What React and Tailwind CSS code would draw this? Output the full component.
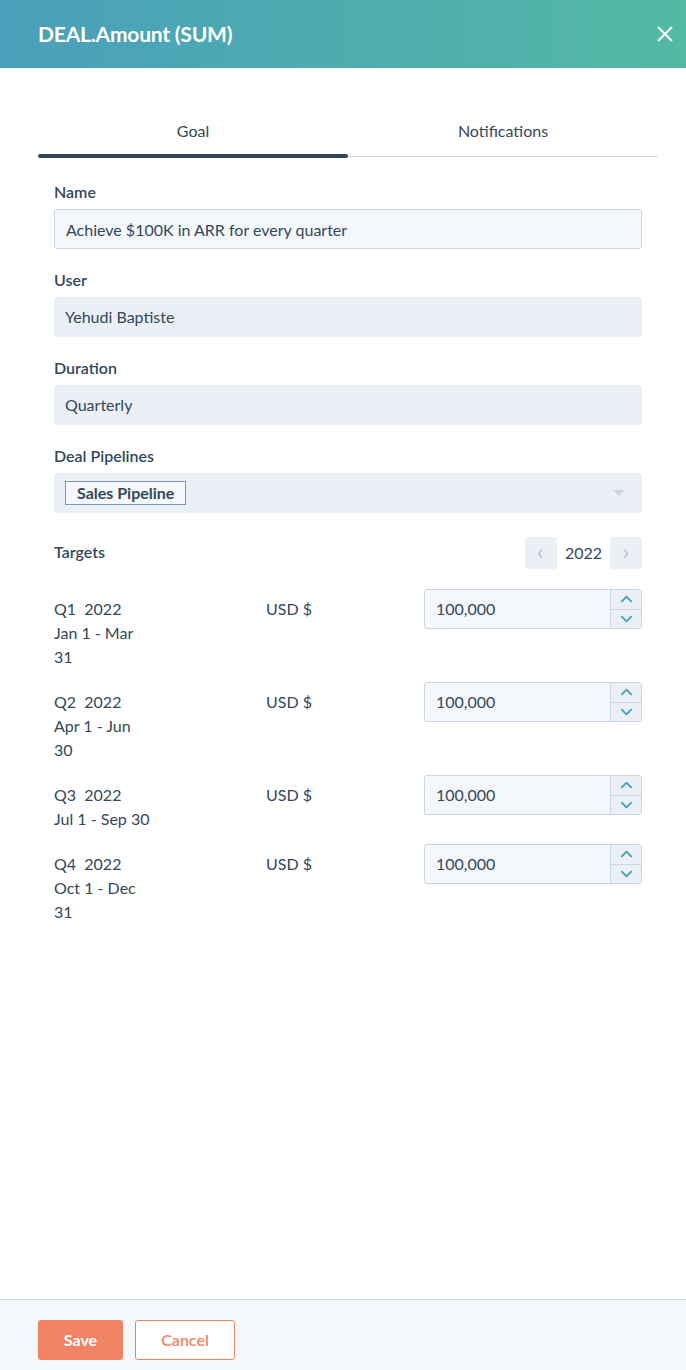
import { useState } from "react";

const quarters = [
  { q: "Q1", range: ["Jan 1 - Mar", "31"], value: "100,000" },
  { q: "Q2", range: ["Apr 1 - Jun", "30"], value: "100,000" },
  { q: "Q3", range: ["Jul 1 - Sep 30"], value: "100,000" },
  { q: "Q4", range: ["Oct 1 - Dec", "31"], value: "100,000" },
];

function Chevron({ dir = "up", className = "" }) {
  const d = {
    up: "M3 9 L8 4 L13 9",
    down: "M3 5 L8 10 L13 5",
    left: "M9 3 L5 8 L9 13",
    right: "M6 3 L10 8 L6 13",
  }[dir];
  return (
    <svg viewBox="0 0 16 14" className={className} fill="none">
      <path d={d} stroke="currentColor" strokeWidth="2" strokeLinecap="round" strokeLinejoin="round" />
    </svg>
  );
}

function Field({ label, children }) {
  return (
    <div className="mb-[19px]">
      <div className="text-[16px] leading-6 font-semibold mb-[5px]">{label}</div>
      {children}
    </div>
  );
}

export default function App() {
  const [tab, setTab] = useState("goal");
  const [name, setName] = useState("Achieve $100K in ARR for every quarter");

  return (
    <div className="min-h-[1370px] flex flex-col bg-white text-[#33475b] font-['Lato','Liberation_Sans',sans-serif]">
      <header className="h-[68px] shrink-0 flex items-center justify-between pl-[38px] pr-[6px] bg-linear-to-r from-[#4a9fba] to-[#53b9a3]">
        <h1 className="text-white text-[21px] font-bold tracking-[-0.2px]">DEAL.Amount (SUM)</h1>
        <button className="w-[30px] h-[30px] flex items-center justify-center text-white">
          <svg viewBox="0 0 16 16" className="w-[16px] h-[16px]" fill="none">
            <path d="M1 1 L15 15 M15 1 L1 15" stroke="currentColor" strokeWidth="2" />
          </svg>
        </button>
      </header>

      <main className="flex-1 pl-[38px] pr-[28px]">
        <div className="grid grid-cols-2 pt-[51px]">
          {[
            ["goal", "Goal"],
            ["notifications", "Notifications"],
          ].map(([id, text]) => (
            <button key={id} onClick={() => setTab(id)} className="flex flex-col items-stretch">
              <span className="text-[16px] leading-6 text-center mb-[11px]">{text}</span>
              <span className="h-[4px] flex items-center">
                {tab === id ? (
                  <span className="w-full h-[4px] rounded-full bg-[#33475b]" />
                ) : (
                  <span className="w-full h-px bg-[#cbd6e2]" />
                )}
              </span>
            </button>
          ))}
        </div>

        <div className="px-4 pt-[22px]">
          <Field label="Name">
            <input
              value={name}
              onChange={(e) => setName(e.target.value)}
              className="w-full h-10 px-[11px] rounded-[3px] border border-[#cbd6e2] bg-[#f5f8fa] text-[16px] outline-none"
            />
          </Field>
          <Field label="User">
            <div className="h-10 px-[11px] flex items-center rounded-[3px] bg-[#eaf0f6] text-[16px]">Yehudi Baptiste</div>
          </Field>
          <Field label="Duration">
            <div className="h-10 px-[11px] flex items-center rounded-[3px] bg-[#eaf0f6] text-[16px]">Quarterly</div>
          </Field>
          <div>
            <div className="text-[16px] leading-6 font-semibold mb-[5px]">Deal Pipelines</div>
            <div className="h-10 pl-[11px] pr-[17px] flex items-center justify-between rounded-[3px] bg-[#eaf0f6]">
              <span className="h-[24px] px-[11px] flex items-center border border-[#7c98b6] bg-[#f5f8fa] text-[16px] font-bold">
                Sales Pipeline
              </span>
              <svg viewBox="0 0 12 6" className="w-[12px] h-[6px]">
                <path d="M0 0 L12 0 L6 6 Z" fill="#cbd6e2" />
              </svg>
            </div>
          </div>

          <div className="mt-6 flex items-center justify-between">
            <span className="text-[16px] leading-6 font-semibold -mt-[3px]">Targets</span>
            <div className="flex items-center">
              <button className="w-8 h-8 rounded-[3px] bg-[#eaf0f6] flex items-center justify-center text-[#b0c1d4]">
                <Chevron dir="left" className="w-[12px] h-[12px]" />
              </button>
              <span className="w-[53px] text-center text-[16px]">2022</span>
              <button className="w-8 h-8 rounded-[3px] bg-[#eaf0f6] flex items-center justify-center text-[#b0c1d4]">
                <Chevron dir="right" className="w-[12px] h-[12px]" />
              </button>
            </div>
          </div>

          <div className="mt-5 flex flex-col gap-[13px]">
            {quarters.map((row) => (
              <div key={row.q} className="grid grid-cols-[212px_158px_1fr] items-start">
                <div className="pt-[8px] text-[16px] leading-6">
                  <div className="whitespace-pre">{row.q}  2022</div>
                  {row.range.map((line) => (
                    <div key={line}>{line}</div>
                  ))}
                </div>
                <div className="pt-[8px] text-[16px] leading-6">USD $</div>
                <div className="h-10 flex rounded-[3px] border border-[#cbd6e2] bg-[#f5f8fa] overflow-hidden">
                  <input
                    defaultValue={row.value}
                    className="flex-1 min-w-0 px-[11px] bg-transparent text-[16px] outline-none"
                  />
                  <div className="w-[31px] flex flex-col border-l border-[#cbd6e2] bg-[#eaf0f6]">
                    <button className="flex-1 flex items-center justify-center text-[#3fa3bb] border-b border-[#cbd6e2]">
                      <Chevron dir="up" className="w-[15px] h-[13px]" />
                    </button>
                    <button className="flex-1 flex items-center justify-center text-[#3fa3bb]">
                      <Chevron dir="down" className="w-[15px] h-[13px]" />
                    </button>
                  </div>
                </div>
              </div>
            ))}
          </div>
        </div>
      </main>

      <footer className="h-[71px] shrink-0 border-t border-[#cbd6e2] bg-[#f5f8fa] px-[38px] pt-[20px] flex items-start gap-3">
        <button className="h-10 w-[85px] rounded-[3px] bg-[#ef8364] text-white text-[16px] font-bold">Save</button>
        <button className="h-10 w-[100px] rounded-[3px] border border-[#ef8364] bg-white text-[#ef8364] text-[16px] font-semibold">
          Cancel
        </button>
      </footer>
    </div>
  );
}
